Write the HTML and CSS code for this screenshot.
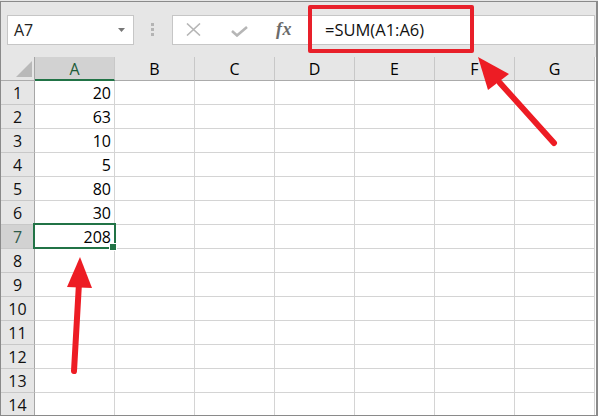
FILE: index.html
```html
<!DOCTYPE html>
<html>
<head>
<meta charset="utf-8">
<link rel="stylesheet" href="styles.css">
</head>
<body>
<div class="frame">
  <div class="toolbar">
    <div class="namebox"><span>A7</span><svg class="caret" width="7" height="4" viewBox="0 0 7 4"><path d="M0 0H7L3.5 4Z" fill="#777"/></svg></div>
    <div class="grip"><i></i><i></i><i></i></div>
    <div class="fbar">
      <svg class="ico-x" width="15" height="13" viewBox="0 0 15 13"><path d="M1 0.5L14 12.5M14 0.5L1 12.5" stroke="#b6b6b6" stroke-width="1.6" fill="none"/></svg>
      <svg class="ico-ok" width="17" height="11" viewBox="0 0 17 11"><path d="M1 5L6 9.5L16 1" stroke="#b6b6b6" stroke-width="2.6" fill="none"/></svg>
      <span class="fx">fx</span>
      <span class="ftext">=SUM(A1:A6)</span>
    </div>
  </div>
  <div class="sheet">
    <div class="corner"><svg width="18" height="18" viewBox="0 0 18 18"><path d="M17 1V17H1Z" fill="#b9b9b9"/></svg></div>
    <div class="ch sel">A</div><div class="ch">B</div><div class="ch">C</div><div class="ch">D</div><div class="ch">E</div><div class="ch">F</div><div class="ch">G</div>

    <div class="rh">1</div><div class="c num">20</div><div class="c"></div><div class="c"></div><div class="c"></div><div class="c"></div><div class="c"></div><div class="c"></div>
    <div class="rh">2</div><div class="c num">63</div><div class="c"></div><div class="c"></div><div class="c"></div><div class="c"></div><div class="c"></div><div class="c"></div>
    <div class="rh">3</div><div class="c num">10</div><div class="c"></div><div class="c"></div><div class="c"></div><div class="c"></div><div class="c"></div><div class="c"></div>
    <div class="rh">4</div><div class="c num">5</div><div class="c"></div><div class="c"></div><div class="c"></div><div class="c"></div><div class="c"></div><div class="c"></div>
    <div class="rh">5</div><div class="c num">80</div><div class="c"></div><div class="c"></div><div class="c"></div><div class="c"></div><div class="c"></div><div class="c"></div>
    <div class="rh">6</div><div class="c num">30</div><div class="c"></div><div class="c"></div><div class="c"></div><div class="c"></div><div class="c"></div><div class="c"></div>
    <div class="rh sel">7</div><div class="c num active">208</div><div class="c"></div><div class="c"></div><div class="c"></div><div class="c"></div><div class="c"></div><div class="c"></div>
    <div class="rh">8</div><div class="c"></div><div class="c"></div><div class="c"></div><div class="c"></div><div class="c"></div><div class="c"></div><div class="c"></div>
    <div class="rh">9</div><div class="c"></div><div class="c"></div><div class="c"></div><div class="c"></div><div class="c"></div><div class="c"></div><div class="c"></div>
    <div class="rh">10</div><div class="c"></div><div class="c"></div><div class="c"></div><div class="c"></div><div class="c"></div><div class="c"></div><div class="c"></div>
    <div class="rh">11</div><div class="c"></div><div class="c"></div><div class="c"></div><div class="c"></div><div class="c"></div><div class="c"></div><div class="c"></div>
    <div class="rh">12</div><div class="c"></div><div class="c"></div><div class="c"></div><div class="c"></div><div class="c"></div><div class="c"></div><div class="c"></div>
    <div class="rh">13</div><div class="c"></div><div class="c"></div><div class="c"></div><div class="c"></div><div class="c"></div><div class="c"></div><div class="c"></div>
    <div class="rh">14</div><div class="c"></div><div class="c"></div><div class="c"></div><div class="c"></div><div class="c"></div><div class="c"></div><div class="c"></div>
  </div>
  <div class="redbox"></div>
  <svg class="arrows" width="598" height="416" viewBox="0 0 598 416">
    <line x1="554" y1="143" x2="500" y2="83" stroke="#ed1c24" stroke-width="6" stroke-linecap="round"/>
    <polygon points="478,57 509,74 488,90" fill="#ed1c24"/>
    <line x1="74" y1="371" x2="79" y2="283" stroke="#ed1c24" stroke-width="6" stroke-linecap="round"/>
    <polygon points="80,257 92,288 67,287" fill="#ed1c24"/>
  </svg>
</div>
</body>
</html>
```

FILE: styles.css
```css
* { box-sizing: border-box; }
html, body { margin: 0; }
body {
  background: #e6e6e6;
  width: 598px;
  height: 416px;
  overflow: hidden;
  padding-top: 1px;
}
.frame {
  position: relative;
  width: 598px;
  height: 415px;
  border: 1px solid #8a8a8a;
  border-right-width: 2px;
  background: #e6e6e6;
  display: flex;
  flex-direction: column;
  overflow: hidden;
  font-family: "Open Sans", "Noto Sans", sans-serif;
  font-size: 16px;
  color: #000;
}
.toolbar {
  flex: none;
  height: 55px;
  display: flex;
  align-items: center;
  padding-left: 6px;
}
.namebox {
  width: 127px;
  height: 30px;
  background: #fff;
  border: 1px solid #c6c6c6;
  display: flex;
  align-items: center;
  justify-content: space-between;
  padding: 0 8px 0 6px;
  color: #222;
}
.caret { display: block; }
.grip {
  margin-left: 17px;
  display: flex;
  flex-direction: column;
  gap: 2px;
}
.grip i {
  display: block;
  width: 3px;
  height: 3px;
  background: #b4b4b4;
}
.fbar {
  flex: 1;
  margin-left: 18px;
  margin-right: 1px;
  height: 30px;
  background: #fff;
  border: 1px solid #c6c6c6;
  display: flex;
  align-items: center;
}
.ico-x { margin-left: 13px; display: block; }
.ico-ok { margin-left: 30px; display: block; margin-top: 3px; }
.fx {
  margin-left: 28px;
  font-family: "Liberation Serif", "DejaVu Serif", serif;
  font-style: italic;
  font-weight: bold;
  font-size: 18px;
  color: #6b6b6b;
  letter-spacing: 0.5px;
}
.ftext {
  margin-left: 33px;
  font-size: 16.5px;
  color: #111;
}
.sheet {
  flex: none;
  display: grid;
  grid-template-columns: 34px repeat(7, 80px);
  grid-auto-rows: 24px;
  background: #fff;
}
.corner {
  background: #e6e6e6;
  border-right: 1px solid #a6a6a6;
  border-bottom: 1px solid #ababab;
  display: flex;
  align-items: flex-end;
  justify-content: flex-end;
  padding: 0 1px 2px 0;
}
.corner svg { display: block; }
.ch {
  background: #e6e6e6;
  border-right: 1px solid #c8c8c8;
  border-bottom: 1px solid #ababab;
  display: flex;
  align-items: center;
  justify-content: center;
  padding-top: 1px;
}
.ch.sel {
  background: #d2d2d2;
  border-bottom: 2px solid #217346;
  color: #1c5c38;
}
.rh {
  background: #e6e6e6;
  border-right: 1px solid #a6a6a6;
  border-bottom: 1px solid #c8c8c8;
  display: flex;
  align-items: center;
  justify-content: center;
  color: #111;
}
.rh.sel {
  background: #d2d2d2;
  color: #2f5b4a;
}
.c {
  border-right: 1px solid #d4d4d4;
  border-bottom: 1px solid #d4d4d4;
}
.num {
  display: flex;
  align-items: center;
  justify-content: flex-end;
  padding-right: 3px;
}
.active { position: relative; }
.active::before {
  content: "";
  position: absolute;
  left: -2px;
  top: -2px;
  right: -2px;
  bottom: -1px;
  border: 2px solid #217346;
}
.active::after {
  content: "";
  position: absolute;
  right: -3px;
  bottom: -3px;
  width: 6px;
  height: 6px;
  background: #217346;
  border: 1px solid #fff;
}
.redbox {
  position: absolute;
  left: 307px;
  top: 3px;
  width: 166px;
  height: 48px;
  border: 4px solid #e8202a;
  border-radius: 2px;
}
.arrows {
  position: absolute;
  left: -1px;
  top: -2px;
  pointer-events: none;
}
```
